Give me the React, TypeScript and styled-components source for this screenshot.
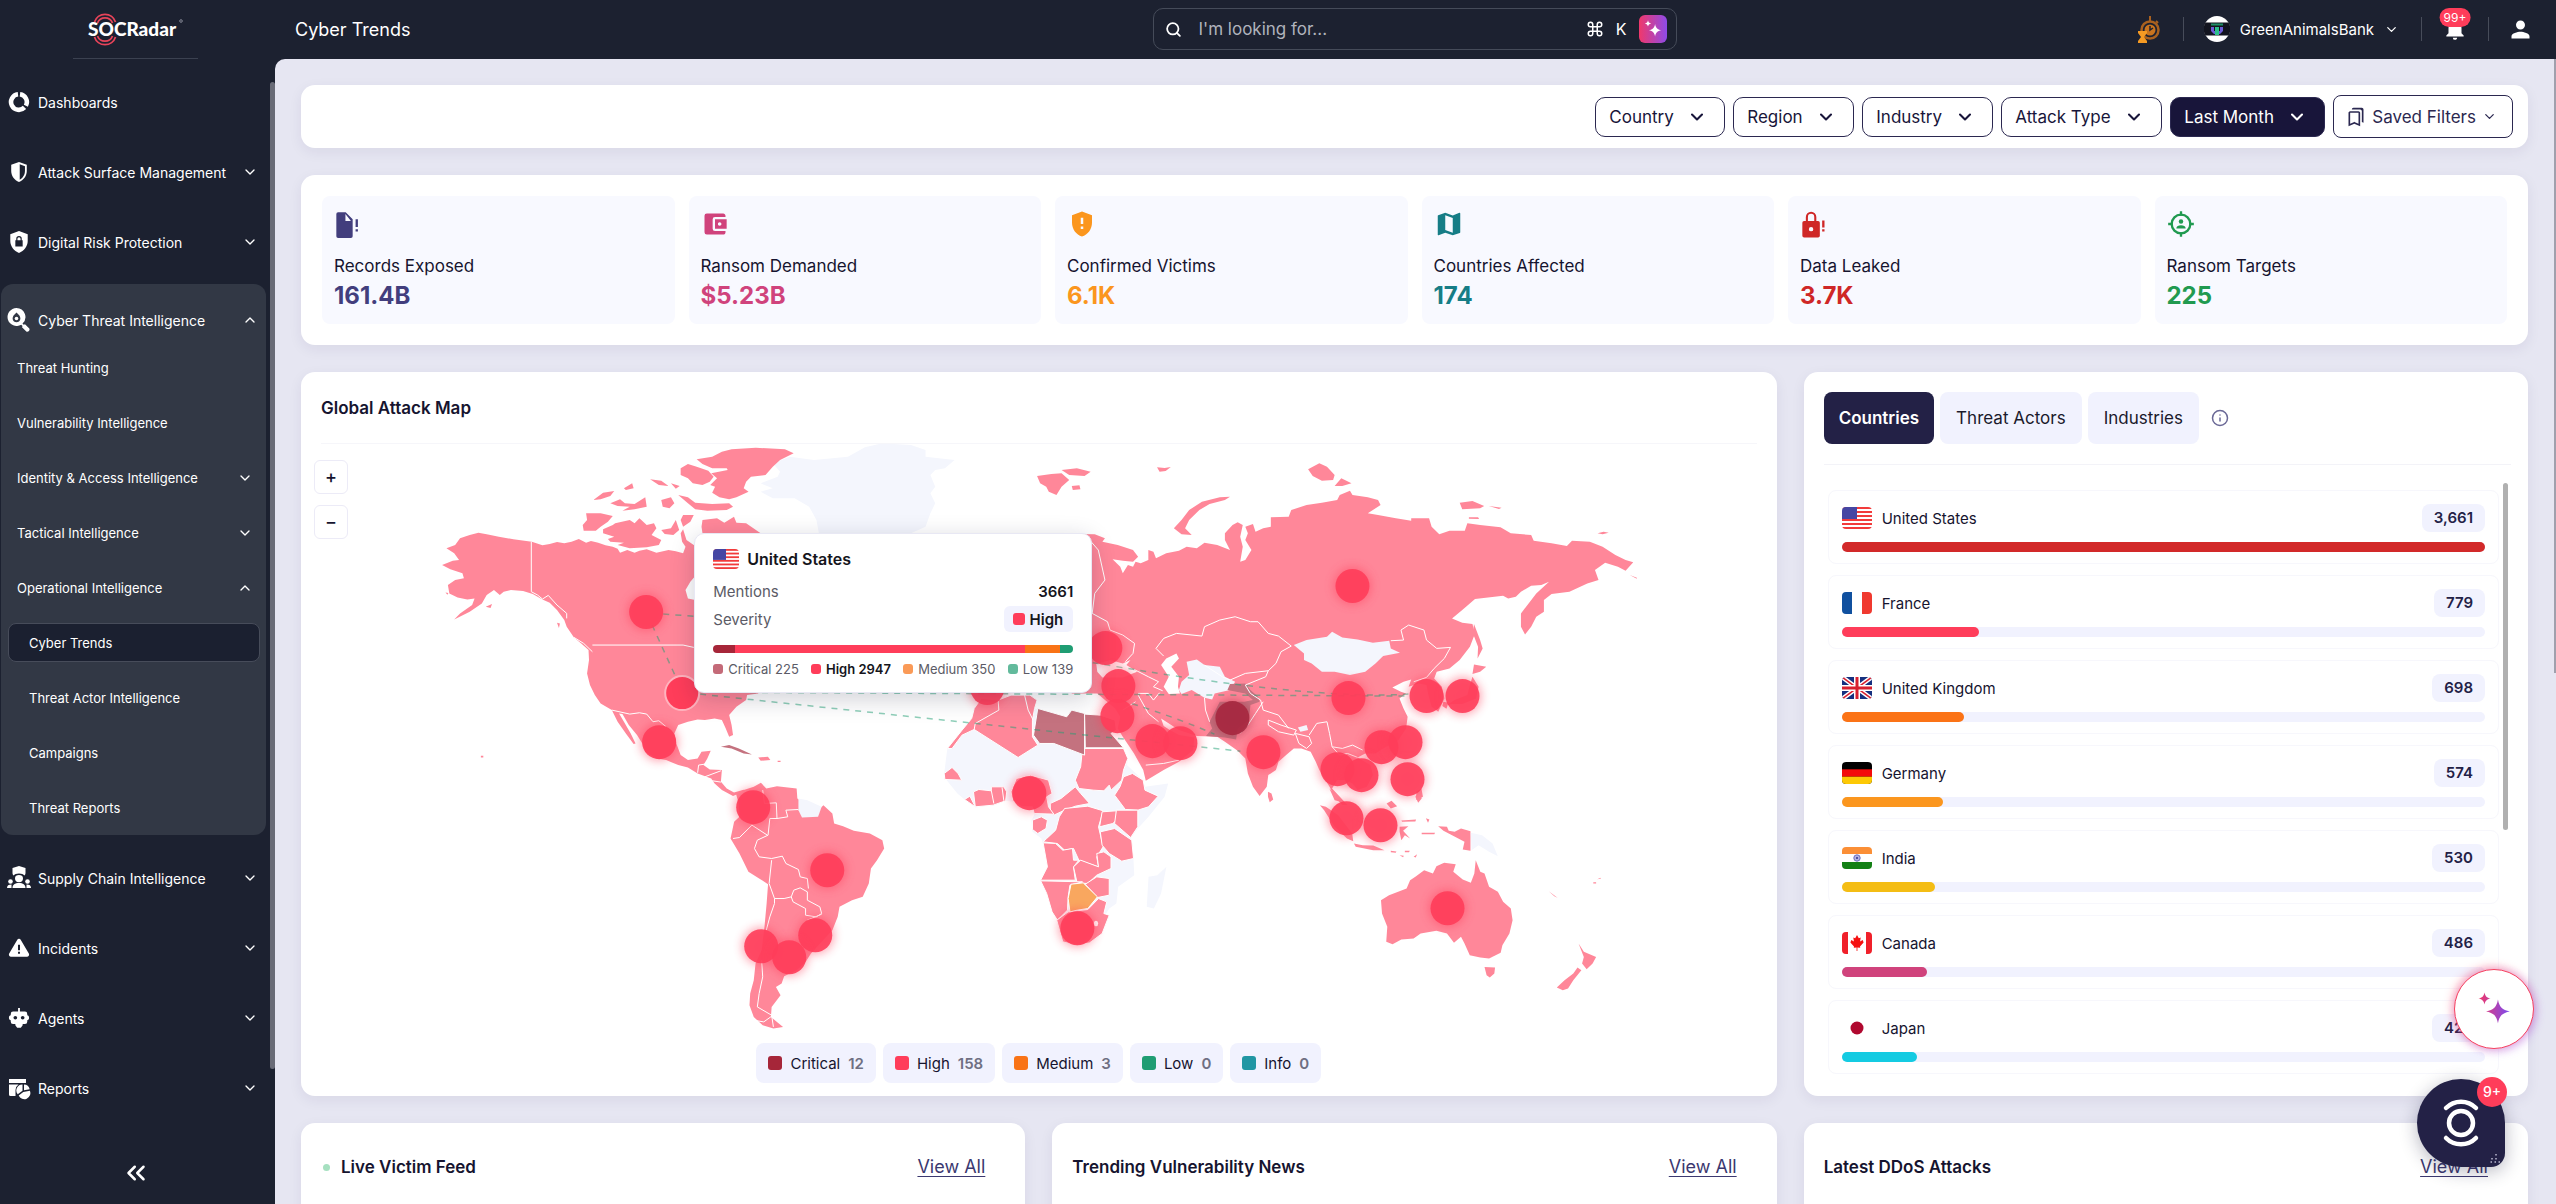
import React from "react";
import styled, { createGlobalStyle } from "styled-components";
import { ChevronDown, ChevronUp, ChevronsLeft, Command, Info, Search } from "lucide-react";
import {
  MdAccountBalanceWallet,
  MdGppMaybe,
  MdMap,
  MdNotifications,
  MdOutlineBookmarks,
  MdPerson,
} from "react-icons/md";

const GlobalStyle = createGlobalStyle`
  *, *::before, *::after { box-sizing: border-box; }
  html, body { margin: 0; padding: 0; }
  body {
    font-family: Inter, "Liberation Sans", sans-serif;
    background: #1c2130;
    color: #16142f;
    overflow: hidden;
  }
  button, input, select { font: inherit; color: inherit; margin: 0; }
  button { cursor: pointer; }
  h1, h2, p, ul { margin: 0; padding: 0; }
  ul { list-style: none; }
`;

/* ---------- Shell ---------- */

const Shell = styled.div`
  display: grid;
  grid-template-columns: 275px minmax(0, 1fr);
  height: 100vh;
  background: #1c2130;
`;

const Sidebar = styled.aside`
  position: relative;
  display: flex;
  flex-direction: column;
  min-height: 0;
  color: #fff;
`;

const Brand = styled.div`
  display: flex;
  justify-content: center;
  align-items: center;
  height: 59px;
  margin: 0 77px 8px 73px;
  border-bottom: 1px solid #3b4150;
  flex: none;
`;

const Nav = styled.nav`
  flex: 1;
  min-height: 0;
  overflow: hidden;
`;

const NavButton = styled.button<{ $compact?: boolean }>`
  display: flex;
  align-items: center;
  gap: 8px;
  width: ${(p) => (p.$compact ? 266 : 267)}px;
  height: ${(p) => (p.$compact ? 56 : 70)}px;
  padding: ${(p) => (p.$compact ? "16px 9px 0 7px" : "0 9px 0 8px")};
  border: 0;
  background: none;
  font-size: 14px;
  text-align: left;
  white-space: nowrap;
  svg { flex: none; }
  span { flex: 1; }
`;

const NavSlot = styled.i`
  display: flex;
  justify-content: center;
  width: 22px;
  flex: none;
`;

const NavGroup = styled.div`
  margin: 7px 0 8px 1px;
  width: 265px;
  background: #323845;
  border-radius: 12px;
  overflow: hidden;
`;

const SubButton = styled.button<{ $deep?: boolean }>`
  display: flex;
  align-items: center;
  justify-content: space-between;
  width: 100%;
  height: 55px;
  padding: 0 13px 0 ${(p) => (p.$deep ? 28 : 16)}px;
  border: 0;
  background: none;
  font-size: 13px;
  text-align: left;
  white-space: nowrap;
`;

const ActiveLink = styled.a`
  display: flex;
  align-items: center;
  height: 39px;
  margin: 8px 6px 8px 7px;
  padding: 0 20px;
  border: 1px solid #474c5a;
  border-radius: 8px;
  background: #1b2030;
  color: #fff;
  font-size: 13px;
  text-decoration: none;
`;

const SideScroll = styled.div`
  position: absolute;
  top: 82px;
  right: 0;
  bottom: 135px;
  width: 5px;
  border-radius: 3px;
  background: #696b77;
`;

const Collapse = styled.button`
  display: flex;
  align-items: center;
  justify-content: center;
  height: 62px;
  margin-right: 4px;
  border: 0;
  background: none;
  flex: none;
`;

const Page = styled.div`
  display: flex;
  flex-direction: column;
  min-width: 0;
  min-height: 0;
`;

/* ---------- Top bar ---------- */

const TopBar = styled.header`
  display: grid;
  grid-template-columns: 1fr 524px 1fr;
  align-items: center;
  height: 59px;
  flex: none;
  padding: 0 22px 1px 20px;
  color: #fff;
  h1 { font-size: 18px; font-weight: 400; }
`;

const SearchBox = styled.label`
  display: flex;
  align-items: center;
  height: 42px;
  padding: 0 9px 0 11px;
  border: 1px solid #454b59;
  border-radius: 10px;
  font-size: 17px;
  input {
    flex: 1;
    min-width: 0;
    margin-left: 15px;
    border: 0;
    outline: 0;
    background: none;
    &::placeholder { color: #b0b3bc; opacity: 1; }
  }
  kbd {
    display: flex;
    align-items: center;
    gap: 12px;
    font: inherit;
    font-size: 16px;
  }
`;

const SparkButton = styled.button`
  display: flex;
  align-items: center;
  justify-content: center;
  width: 28px;
  height: 28px;
  margin-left: 12px;
  padding: 0;
  border: 0;
  border-radius: 6px;
  background: linear-gradient(90deg, #f0386b, #8e4be8);
`;

const TopActions = styled.div`
  display: flex;
  align-items: center;
  justify-content: flex-end;
`;

const Divider = styled.span`
  width: 1px;
  height: 24px;
  background: #474c5a;
`;

const Account = styled.button`
  display: flex;
  align-items: center;
  gap: 10px;
  margin: 0 22px 0 20px;
  padding: 0;
  border: 0;
  background: none;
  font-size: 15px;
`;

const IconButton = styled.button<{ $left: number; $right: number }>`
  position: relative;
  display: flex;
  margin: 0 ${(p) => p.$right}px 0 ${(p) => p.$left}px;
  padding: 0;
  border: 0;
  background: none;
`;

const AlertCount = styled.span`
  position: absolute;
  left: 50%;
  bottom: 15px;
  transform: translateX(-50%);
  padding: 0 4px;
  border-radius: 10px;
  background: #ff3d5a;
  font-size: 12px;
  line-height: 19px;
`;

/* ---------- Content ---------- */

const Main = styled.main`
  position: relative;
  flex: 1;
  min-height: 0;
  overflow: hidden;
  padding: 26px 28px 0 26px;
  border-top-left-radius: 10px;
  background: #e6e6f2;
`;

const PageScroll = styled.div`
  position: absolute;
  top: 0;
  right: 0;
  width: 2px;
  height: 614px;
  background: #a0a0ad;
`;

const Stack = styled.div`
  display: flex;
  flex-direction: column;
  gap: 27px;
`;

const Card = styled.section`
  background: #fff;
  border-radius: 14px;
  box-shadow: 0 4px 14px rgba(40, 35, 90, 0.07);
`;

const FilterCard = styled(Card)`
  display: flex;
  align-items: center;
  justify-content: flex-end;
  gap: 8px;
  height: 63px;
  padding: 0 15px;
`;

const SelectBox = styled.label<{ $dark?: boolean }>`
  position: relative;
  display: flex;
  align-items: center;
  height: 40px;
  border: 1px solid #2b2850;
  border-radius: 10px;
  background: ${(p) => (p.$dark ? "#18153a" : "#fff")};
  color: ${(p) => (p.$dark ? "#fff" : "#18153a")};
  font-size: 17px;
  select {
    appearance: none;
    height: 100%;
    padding: 0 50px 0 13px;
    border: 0;
    outline: 0;
    background: none;
  }
  svg {
    position: absolute;
    right: 17px;
    pointer-events: none;
  }
`;

const SavedButton = styled.button`
  display: flex;
  align-items: center;
  gap: 6px;
  height: 43px;
  padding: 0 15px 0 12px;
  border: 1px solid #2b2850;
  border-radius: 8px;
  background: #fff;
  color: #2b2850;
  font-size: 17px;
`;

const StatCard = styled(Card)`
  display: grid;
  grid-template-columns: repeat(6, minmax(0, 1fr));
  gap: 14px;
  padding: 21px;
`;

const Stat = styled.div<{ $color: string }>`
  height: 128px;
  padding: 14px 12px;
  border-radius: 8px;
  background: #f8f9ff;
  svg { display: block; color: ${(p) => p.$color}; }
  p { margin-top: 17px; font-size: 17px; line-height: 22px; }
  strong {
    display: block;
    margin-top: 4px;
    color: ${(p) => p.$color};
    font-size: 24px;
    font-weight: 700;
    line-height: 30px;
  }
`;

const Columns = styled.div`
  display: grid;
  grid-template-columns: repeat(3, minmax(0, 1fr));
  gap: 27px;
`;

const MapCard = styled(Card)`
  grid-column: span 2;
  padding: 0 20px 13px;
`;

const CardTitle = styled.h2`
  font-size: 17px;
  font-weight: 600;
  line-height: 24px;
`;

const MapHead = styled.div`
  display: flex;
  align-items: center;
  height: 72px;
  border-bottom: 1px solid #f6f6fa;
`;

const MapArea = styled.div`
  position: relative;
  > svg { display: block; width: 100%; height: auto; }
`;

const ZoomControls = styled.div`
  position: absolute;
  top: 16px;
  left: -7px;
  display: flex;
  flex-direction: column;
  gap: 11px;
  button {
    width: 34px;
    height: 34px;
    padding: 0;
    border: 1px solid #ecebf7;
    border-radius: 6px;
    background: #fff;
    font-size: 18px;
    font-weight: 500;
    line-height: 30px;
  }
`;

const Tooltip = styled.div`
  position: absolute;
  top: 15%;
  left: 26%;
  width: 398px;
  height: 160px;
  padding: 13px 18px;
  border: 1px solid #e8e8f4;
  border-radius: 10px;
  background: #fff;
  box-shadow: 0 6px 24px rgba(20, 20, 50, 0.2);
  color: #15151c;
  font-size: 15px;
`;

const TipTitle = styled.div`
  display: flex;
  align-items: center;
  gap: 8px;
  height: 24px;
  margin-bottom: 6px;
  font-size: 16px;
  font-weight: 600;
`;

const TipRow = styled.div`
  display: flex;
  align-items: center;
  justify-content: space-between;
  height: 28px;
  color: #5b5b66;
  b { color: #15151c; font-weight: 600; }
`;

const SeverityTag = styled.b`
  display: flex;
  align-items: center;
  gap: 5px;
  height: 26px;
  padding: 0 10px 0 9px;
  border-radius: 6px;
  background: #f1f2fe;
`;

const Swatch = styled.i<{ $color: string; $size: number }>`
  width: ${(p) => p.$size}px;
  height: ${(p) => p.$size}px;
  border-radius: 3px;
  background: ${(p) => p.$color};
`;

const SplitBar = styled.div`
  display: flex;
  height: 8px;
  margin: 12px 0 7px;
  border-radius: 4px;
  overflow: hidden;
  i { height: 100%; }
`;

const TipLegend = styled.div`
  display: flex;
  align-items: center;
  justify-content: space-between;
  color: #5b5b66;
  font-size: 13px;
  line-height: 18px;
  white-space: nowrap;
  span { display: flex; align-items: center; gap: 5px; }
  b { color: #15151c; font-weight: 600; }
`;

const Legend = styled.div`
  display: flex;
  justify-content: center;
  gap: 7px;
  margin-top: 3px;
`;

const LegendChip = styled.button`
  display: flex;
  align-items: center;
  gap: 8px;
  height: 40px;
  padding: 0 12px;
  border: 0;
  border-radius: 8px;
  background: #f1f2fe;
  font-size: 15px;
  b { color: #6f6f82; font-weight: 600; }
`;

const RankCard = styled(Card)`
  padding: 20px 17px 21px 20px;
`;

const TabRow = styled.div`
  display: flex;
  align-items: center;
  gap: 6px;
  height: 73px;
  padding-bottom: 21px;
  border-bottom: 1px solid #f3f3f8;
  > svg { margin-left: 6px; color: #6a6896; }
`;

const Tab = styled.button<{ $active?: boolean }>`
  height: 52px;
  padding: 0 ${(p) => (p.$active ? 15 : 16)}px;
  border: 0;
  border-radius: 8px;
  background: ${(p) => (p.$active ? "#232146" : "#f1f2fe")};
  color: ${(p) => (p.$active ? "#fff" : "#1b1a2c")};
  font-size: 17px;
  font-weight: ${(p) => (p.$active ? 600 : 400)};
`;

const RankScroll = styled.div`
  position: relative;
  padding: 25px 12px 0 4px;
  &::after {
    content: "";
    position: absolute;
    top: 18px;
    right: 3px;
    width: 5px;
    height: 347px;
    border-radius: 3px;
    background: #b0b0b0;
  }
`;

const RankList = styled.ul`
  display: flex;
  flex-direction: column;
  gap: 11px;
`;

const RankItem = styled.li`
  height: 74px;
  padding: 13px;
  border: 1px solid #f7f7fc;
  border-radius: 8px;
`;

const RankHead = styled.div`
  display: flex;
  align-items: center;
  gap: 10px;
  height: 28px;
  font-size: 15px;
  span { flex: 1; }
  b {
    padding: 0 12px;
    border-radius: 8px;
    background: #f1f2fe;
    color: #232146;
    font-weight: 600;
    line-height: 28px;
  }
`;

const Track = styled.div`
  height: 10px;
  margin-top: 10px;
  border-radius: 5px;
  background: #f1f2fe;
`;

const Fill = styled.div`
  height: 100%;
  border-radius: 5px;
`;

const FeedCard = styled(Card)`
  height: 320px;
  padding: 32px 40px 0 20px;
`;

const FeedHead = styled.div`
  display: flex;
  align-items: center;
  gap: 10px;
  height: 24px;
  h2 { flex: 1; }
  a { color: #3b3870; font-size: 18px; line-height: 24px; text-underline-offset: 3px; }
`;

const LiveDot = styled.i`
  width: 7px;
  height: 7px;
  border-radius: 50%;
  margin: 0 1px 0 2px;
  background: #a6e0c0;
`;

/* ---------- Floating buttons ---------- */

const AssistantButton = styled.button`
  position: fixed;
  right: 22px;
  bottom: 155px;
  display: flex;
  align-items: center;
  justify-content: center;
  width: 80px;
  height: 80px;
  padding: 0;
  border: 1px solid #f5405f;
  border-radius: 50%;
  background: #fff;
  box-shadow: -2px -2px 10px rgba(255, 61, 92, 0.4), 2px 2px 10px rgba(150, 70, 230, 0.4);
`;

const HelpButton = styled.button`
  position: fixed;
  right: 51px;
  bottom: 37px;
  width: 88px;
  height: 88px;
  padding: 0;
  border: 0;
  border-radius: 44px 44px 14px 44px;
  background: #232146;
  box-shadow: 0 4px 18px rgba(20, 20, 50, 0.3);
  svg { display: block; }
`;

const HelpCount = styled.span`
  position: absolute;
  top: -2px;
  right: -2px;
  width: 30px;
  height: 30px;
  border-radius: 50%;
  background: #ff3d5a;
  color: #fff;
  font-size: 14px;
  font-weight: 500;
  line-height: 30px;
  text-align: center;
`;

/* ---------- Icons ---------- */

const Glyph = ({ size = 24, children }: { size?: number; children: React.ReactNode }) => (
  <svg width={size} height={size} viewBox="0 0 24 24" fill="currentColor" aria-hidden="true">
    {children}
  </svg>
);

const DonutIcon = () => (
  <svg width="22" height="22" viewBox="0 0 24 24" fill="none" stroke="currentColor" strokeWidth="5" aria-hidden="true">
    <path d="M13.1 3.600A8.500 8.500 0 0 1 19.500 16.100M18 17.900A8.500 8.500 0 1 1 10.900 3.600" />
  </svg>
);

const HalfShield = () => (
  <Glyph size={22}>
    <path fillRule="evenodd" d="M12 1 3.5 4.2V11c0 5.3 3.6 10.2 8.5 12 4.9-1.8 8.5-6.700 8.5-12V4.2zM12.8 3.5l5.7 2.2V11c0 4-2.4 7.7-5.7 9.5z" />
  </Glyph>
);

const LockShield = () => (
  <Glyph size={22}>
    <path fillRule="evenodd" d="M12 0 2.500 3.500V11c0 5.800 4 11 9.500 13 5.500-2 9.500-7.200 9.500-13V3.500zM8 10h1V8.500a3 3 0 0 1 6 0V10h1v7H8zm2.300 0h3.400V8.500a1.700 1.700 0 0 0-3.400 0z" />
  </Glyph>
);

const ThreatSearch = () => (
  <Glyph size={24}>
    <path fillRule="evenodd" d="M9.500 0a9 9 0 1 0 4.700 16.700l1.300 1.300-.5 1.300 4.300 4.300c1.900 1 4-1.100 3-3l-4.300-4.300-1.300.5-1.200-1.200A9 9 0 0 0 9.500 0zm0 4.500c3 2.700 4.200 4.400 3.800 6.800a3.900 3.900 0 0 1-7.600 0C5.300 8.900 6.500 7.200 9.500 4.500z" />
    <circle cx="9.500" cy="10.500" r="1.800" />
  </Glyph>
);

const SupplyChain = () => (
  <Glyph size={24}>
    <path d="M12 0 5.500 2v5c0 1 .5 2 1 2.600 1-1.200 3-2.100 5.500-2.100s4.500.9 5.500 2.100c.5-.6 1-1.600 1-2.600V2z" />
    <path d="M12 9c-2.300 0-4 1-4 3.300a4 4 0 0 0 8 0C16 10 14.300 9 12 9zM5.500 22c0-3.500 2.500-5 6.500-5s6.500 1.500 6.500 5z" />
    <circle cx="3.500" cy="15.500" r="2.300" />
    <circle cx="20.500" cy="15.500" r="2.300" />
    <path d="M0 22c0-2.500 1.500-3.500 4.500-3.500V22zM24 22c0-2.500-1.500-3.500-4.500-3.500V22z" />
  </Glyph>
);

const AlertTriangle = () => (
  <Glyph size={22}>
    <path fillRule="evenodd" d="M10 3.200a2.300 2.300 0 0 1 4 0l8.700 14.900a2.300 2.300 0 0 1-2 3.400H3.300a2.300 2.300 0 0 1-2-3.400zM10.900 8.500h2.200v6h-2.200zm0 7.500h2.200v2.200h-2.200z" />
  </Glyph>
);

const BotIcon = () => (
  <Glyph size={22}>
    <path fillRule="evenodd" d="M11 1h2v4h5.500a2.500 2.500 0 0 1 2.500 2.500V9c1.200.2 2 1.300 2 2.800s-.8 2.500-2 2.700v1.500a2.500 2.500 0 0 1-2.500 2.500H16V20l-2 2.500h-4L8 20v-1.500H5.500A2.500 2.500 0 0 1 3 16v-1.500c-1.200-.2-2-1.200-2-2.700S1.800 9.200 3 9V7.500A2.500 2.500 0 0 1 5.500 5H11zM8 9.700a2 2 0 1 0 0 4 2 2 0 0 0 0-4zm8 0a2 2 0 1 0 0 4 2 2 0 0 0 0-4z" />
  </Glyph>
);

const ReportIcon = () => (
  <Glyph size={24}>
    <path d="M2 3h17v4H2zM2 8.500h9.500A7 7 0 0 0 8.500 14v6H3.500A1.500 1.500 0 0 1 2 18.500z" />
    <path d="M15.500 8.500v6.200l-4.800 3.600A6 6 0 0 1 15.500 8.500zM17 8.500a6 6 0 0 1 5.700 4.700L17 14.300zM11.700 19.500l4.600-3.500 6.600-1.300a6 6 0 0 1-11.200 4.800z" />
  </Glyph>
);

const FileAlert = () => (
  <Glyph size={28}>
    <path fillRule="evenodd" d="M3.500 2A1.500 1.500 0 0 0 2 3.500v19A1.500 1.500 0 0 0 3.500 24h11a1.500 1.500 0 0 0 1.500-1.500V8l-6-6zM9.800 3.500 14.500 9.500H9.800zM18.500 8h2v6.500h-2zm0 8.500h2v2h-2z" />
  </Glyph>
);

const LockAlert = () => (
  <Glyph size={28}>
    <path fillRule="evenodd" d="M3.500 9.500H5V6a4.500 4.500 0 0 1 9 0v3.500h1.500A1.500 1.500 0 0 1 17 11v11a1.500 1.500 0 0 1-1.500 1.500h-12A1.500 1.500 0 0 1 2 22V11a1.500 1.500 0 0 1 1.500-1.500zm3.300 0h5.400V6a2.700 2.700 0 0 0-5.400 0zm2.700 5a1.900 1.900 0 1 0 0 3.800 1.900 1.900 0 0 0 0-3.800zM19 9h2v6h-2zm0 7.500h2v2h-2z" />
  </Glyph>
);

const TargetPerson = () => (
  <svg width="28" height="28" viewBox="0 0 24 24" fill="none" stroke="currentColor" strokeWidth="2" aria-hidden="true">
    <circle cx="12" cy="12" r="8" />
    <path d="M12 1v4M12 19v4M1 12h4M19 12h4" />
    <circle cx="12" cy="9.800" r="1.900" fill="currentColor" stroke="none" />
    <path d="M8 15.800c0-2 1.800-2.800 4-2.800s4 .8 4 2.800z" fill="currentColor" stroke="none" />
  </svg>
);

const Sparkles = ({ size, gradient }: { size: number; gradient?: boolean }) => (
  <svg width={size} height={size} viewBox="0 0 24 24" aria-hidden="true">
    <defs>
      <linearGradient id="sparkle" x1="0" x2="1">
        <stop offset="0" stopColor="#f0386b" />
        <stop offset="1" stopColor="#7a4bf0" />
      </linearGradient>
    </defs>
    <path
      fill={gradient ? "url(#sparkle)" : "#fff"}
      d="M14.500 6c.9 4.800 2.700 6.600 7.500 7.500-4.800.9-6.600 2.700-7.500 7.500-.9-4.800-2.700-6.600-7.500-7.500 4.800-.9 6.600-2.700 7.500-7.500zM6 1.500c.5 2.400 1.400 3.300 3.800 3.800C7.400 5.800 6.500 6.700 6 9.100 5.500 6.700 4.600 5.800 2.200 5.300 4.600 4.800 5.500 3.900 6 1.500z"
    />
  </svg>
);

const TimerIcon = () => (
  <svg width="24" height="28" viewBox="0 0 24 28" aria-hidden="true">
    <circle cx="14" cy="15" r="8.500" fill="none" stroke="#a9611f" strokeWidth="2.500" />
    <circle cx="14" cy="15" r="5.500" fill="#c9741f" />
    <path d="M14 1v5M20 6l2 2" stroke="#a9611f" strokeWidth="2" />
    <path d="M14 11v4l3-2" stroke="#1c2130" strokeWidth="1.500" fill="none" />
    <path d="M2 16h9v2l-3 4 3 4v2H2v-2l3-4-3-4z" fill="#f59a23" />
  </svg>
);

const Avatar = () => (
  <svg width="26" height="26" viewBox="0 0 26 26" aria-hidden="true">
    <circle cx="13" cy="13" r="13" fill="#fff" />
    <path d="M1.500 6.500h23a13 13 0 0 1 0 13h-23a13 13 0 0 1 0-13z" fill="#12141f" />
    <path d="M7 7.500h12v2H7z" fill="#1f8f66" />
    <path d="M7 11h3v4h6v-4h3v4l-3 3h-6l-3-3z" fill="#6b5bd6" />
    <path d="M11 11h4v8h-4z" fill="#2bbf8a" />
  </svg>
);

const Logo = () => (
  <svg width="98" height="34" viewBox="0 0 98 34" role="img" aria-label="SOCRadar">
    <g fill="none" stroke="#e8445a" strokeWidth="1.800">
      <path d="M7.500 10a11 11 0 0 1 21 0M10.500 11a8 8 0 0 1 15 0M7.500 25a11 11 0 0 0 21 0M10.500 24a8 8 0 0 0 15 0" />
    </g>
    <text x="1" y="24" fill="#fff" fontFamily="Lato, sans-serif" fontWeight="900" fontSize="19">
      SOCRadar
    </text>
    <circle cx="94" cy="9" r="1.300" fill="none" stroke="#9a9dab" strokeWidth="0.800" />
  </svg>
);

/* ---------- Flags ---------- */

const flagArt: Record<string, React.ReactNode> = {
  us: (
    <>
      <rect width="30" height="22" fill="#fff" />
      {[0, 1, 2, 3, 4, 5].map((i) => (
        <rect key={i} y={i * 4} width="30" height="2" fill="#f23b3b" />
      ))}
      <rect width="15" height="12" fill="#4546a3" />
    </>
  ),
  fr: (
    <>
      <rect width="30" height="22" fill="#fff" />
      <rect width="10" height="22" fill="#10509f" />
      <rect x="20" width="10" height="22" fill="#f0392f" />
    </>
  ),
  gb: (
    <>
      <rect width="30" height="22" fill="#16307f" />
      <path d="M0 0 30 22M30 0 0 22" stroke="#fff" strokeWidth="4.500" />
      <path d="M0 0 30 22M30 0 0 22" stroke="#d8202f" strokeWidth="1.500" />
      <path d="M15 0v22M0 11h30" stroke="#fff" strokeWidth="6" />
      <path d="M15 0v22M0 11h30" stroke="#d8202f" strokeWidth="3" />
    </>
  ),
  de: (
    <>
      <rect width="30" height="22" fill="#000" />
      <rect y="7.300" width="30" height="7.400" fill="#f40b0b" />
      <rect y="14.700" width="30" height="7.300" fill="#fdc905" />
    </>
  ),
  in: (
    <>
      <rect width="30" height="22" fill="#fff" />
      <rect width="30" height="7" fill="#fb8f36" />
      <rect y="15" width="30" height="7" fill="#138015" />
      <circle cx="15" cy="11" r="3.200" fill="#b3b3e0" stroke="#6f6fc0" />
      <circle cx="15" cy="11" r="1" fill="#303090" />
    </>
  ),
  ca: (
    <>
      <rect width="30" height="22" fill="#fff" />
      <rect width="6" height="22" fill="#f0202a" />
      <rect x="24" width="6" height="22" fill="#f0202a" />
      <path d="m15 3 1.800 3.200 1.900-.7-.6 4 2.600-1.500.9 2.600-3.600 4 .2 1.200-2.800-.4v3.600h-.8v-3.600l-2.800.4.200-1.200-3.600-4 .9-2.600 2.600 1.500-.6-4 1.900.7z" fill="#f51010" />
    </>
  ),
  jp: (
    <>
      <rect width="30" height="22" fill="#fff" />
      <circle cx="15" cy="11" r="6.500" fill="#b0082f" />
    </>
  ),
};

const FlagSvg = styled.svg`
  display: block;
  flex: none;
  border-radius: 4px;
`;

const Flag = ({ code, width = 30 }: { code: string; width?: number }) => (
  <FlagSvg width={width} height={width === 30 ? 22 : 20} viewBox="0 0 30 22" preserveAspectRatio="none" aria-hidden="true">
    {flagArt[code]}
  </FlagSvg>
);

/* ---------- World map ---------- */

const HIGH = "#ff8799";
const NONE = "#f4f6fd";
const CRIT = "#c4727f";

const northAmerica =
  "M368 518 385 523 410 530 440 538 478 545 500 556 515 552 530 546 545 550 560 545 575 537 590 548 600 543 615 548 630 556 645 560 655 566 660 578 675 570 690 578 700 572 715 568 735 578 760 570 775 574 790 580 795 560 788 545 785 520 790 508 797 540 812 555 830 560 820 640 805 665 795 690 800 715 815 720 830 740 940 900 945 1000 922 1005 920 1020 900 1040 885 1065 890 1095 893 1125 885 1130 878 1105 870 1080 855 1075 835 1080 820 1078 800 1085 780 1095 772 1120 776 1150 785 1185 800 1200 820 1195 828 1175 847 1172 840 1195 832 1215 845 1228 870 1230 868 1265 880 1285 895 1297 915 1289 932 1295 925 1303 905 1300 893 1308 870 1290 855 1270 848 1255 820 1240 800 1222 780 1215 755 1200 735 1195 712 1175 706 1150 695 1125 678 1095 665 1062 658 1060 668 1085 682 1120 692 1150 688 1152 672 1120 655 1085 643 1050 620 1030 608 1005 598 975 592 940 596 900 595 870 580 850 565 832 550 800 545 780 530 750 515 728 500 718 480 702 460 693 435 690 420 695 412 705 400 690 385 705 375 730 350 755 318 778 330 760 355 735 360 715 345 718 325 712 308 700 305 675 320 660 338 655 335 640 310 628 293 615 315 602 328 600 318 580 302 565 320 555 330 535 350 525Z";

const arctic =
  "M818 298 850 290 870 275 890 268 940 263 1000 268 1018 280 990 300 975 320 960 345 930 350 920 365 915 385 925 395 900 412 885 418 865 412 850 398 856 380 846 375 860 355 848 340 882 330 880 325 850 325 830 312ZM785 325 800 312 818 320 842 332 853 350 845 365 830 375 810 370 800 355 785 345ZM590 460 620 460 645 468 635 485 620 500 610 512 585 512 583 495 592 480ZM650 490 680 480 690 490 700 475 715 495 730 490 735 505 725 525 745 540 740 555 715 562 680 565 655 555 668 548 640 545 635 537 648 530 625 520 625 508 645 495ZM605 420 625 398 648 393 640 408 620 418ZM640 430 660 418 670 430 690 432 712 412 715 440 690 448 665 452 680 440 655 438ZM668 385 685 370 688 385 672 390ZM722 358 745 362 760 378 740 375ZM745 420 765 412 772 430 762 445 748 440ZM780 405 800 412 815 428 850 432 885 430 893 440 880 450 840 452 815 448 800 430ZM765 370 783 378 775 386ZM830 480 860 475 875 488 895 470 900 488 920 490 935 505 950 520 830 520 828 500ZM745 510 765 505 775 480 782 510 770 525 752 522ZM790 465 812 465 805 485 790 500 785 480ZM383 740 396 732 393 744ZM530 788 536 790 534 804ZM373 1187h5v5h-5ZM945 1192 965 1190 970 1200 950 1202ZM985 1202h6v4h-6ZM300 697l6 2-2 5Z";

const greenland =
  "M950 370 985 350 990 335 975 310 1010 290 1060 300 1130 290 1165 262 1200 250 1260 255 1290 270 1290 290 1350 300 1330 325 1310 330 1300 345 1310 380 1300 400 1310 430 1300 460 1290 500 1260 520 1150 560 1100 560 1070 520 1065 480 1050 440 1020 415 975 415 950 395 975 385Z";

const americaBorders =
  "M477 545V695L490 705 500 717 512 706 530 735 550 760 550 775M603 855H790L812 862M643 1050 680 1062 700 1058 715 1062 728 1085 740 1082 755 1100M820 1238 822 1215 835 1212M835 1250 868 1232M850 1262 868 1266M565 832 585 850 603 875";

const eurasia =
  "M150 402 185 403 205 415 200 425 230 435 260 450 270 470 260 485 240 482 220 478 235 500 240 520 250 495 260 500 265 485 275 490 290 480 290 450 300 455 305 475 325 460 350 452 365 440 385 445 400 428 425 435 450 450 440 420 440 400 455 375 465 367 475 375 470 410 475 440 470 485 480 480 492 450 480 420 485 400 480 380 495 372 500 395 515 385 530 380 530 352 565 350 570 330 600 315 630 308 660 300 665 285 685 272 690 285 720 292 740 300 745 315 720 340 740 345 775 355 805 362 805 355 840 355 845 380 860 403 880 392 910 392 915 370 940 375 980 382 1000 400 1040 405 1045 422 1080 430 1110 438 1120 422 1155 425 1180 440 1205 465 1225 480 1240 487 1225 512 1210 500 1185 488 1165 510 1172 540 1150 550 1115 575 1080 582 1065 600 1065 635 1050 650 1040 680 1028 703 1020 680 1020 640 1035 610 1050 580 1075 545 1060 555 1040 557 1020 575 1010 590 995 595 985 587 930 597 905 630 885 655 905 668 925 672 930 700 920 740 900 780 880 805 855 815 850 835 865 860 870 895 858 935 845 920 838 880 835 855 820 850 800 860 805 838 790 845 768 862 785 875 795 880 782 895 790 925 798 950 795 985 780 1020 750 1045 735 1060 715 1060 700 1072 725 1095 730 1125 718 1160 700 1170 690 1150 675 1140 660 1140 650 1165 662 1185 680 1215 670 1215 655 1190 645 1160 635 1135 625 1110 618 1085 608 1055 590 1045 575 1045 560 1065 545 1085 540 1110 525 1125 522 1160 508 1188 495 1160 485 1120 480 1075 465 1052 440 1025 425 1010 385 1008 350 990 325 965 315 955 320 978 332 990 350 1005 380 1012 378 1050 350 1085 320 1110 285 1142 280 1110 262 1060 240 1010 230 985 235 950 225 925 190 880 140 880 120 600Z";

const eurasiaIslands =
  "M340 385 355 360 370 330 395 305 430 292 450 290 440 300 410 312 390 330 370 360 362 385 375 405 355 403ZM72 228 100 222 120 220 135 240 120 260 110 285 95 275 90 260 78 250ZM120 210 150 205 177 215 165 228 135 225ZM140 258l15-2 2 12-15 2ZM307 202l15 2 12-3-10 12-12 2ZM603 208 625 190 640 200 655 225 652 240 630 242 612 228ZM655 258 668 235 688 250 670 258ZM900 308 925 303 948 318 940 325 905 328ZM957 318l25 5-5 4ZM918 352l18 0 2 5-20-1ZM1170 400 1182 395 1192 398 1180 403ZM1233 525l14 8v3ZM928 672 940 720 945 745 935 775 936 740 926 700ZM928 793 952 800 940 815 925 822ZM925 830 937 860 932 895 905 912 885 912 875 915 890 900 915 885 920 855ZM868 905l10 3-4 18-8-8ZM815 1175 825 1165 828 1190 815 1200Z";

const seas =
  "M188 792 215 780 240 790 255 780 247 795 268 815 240 832 200 832 190 815ZM315 795 325 775 345 760 350 775 335 800 350 830 348 860 352 880 330 882 320 860 330 830Z";

const unlistedAsia =
  "M365 785 385 778 400 795 430 800 440 830 460 845 450 870 420 880 415 898 400 893 375 870 355 882 350 870 355 845 370 825ZM575 735 600 720 640 710 650 695 670 712 700 718 730 728 762 722 765 745 783 758 750 768 735 790 715 815 685 825 655 815 630 815 610 790 595 780 595 760ZM583 982 600 975 603 990 588 995Z";

const criticalAsia = "M403 1008 415 985 410 965 430 905 455 905 478 905 495 900 480 880 445 870 450 852 480 850 490 870 505 890 508 905 490 915 487 960 465 985 462 1018 440 1012Z";

const asiaBorders =
  "M175 420 192 450 205 540 185 580 180 640 210 665 215 690 240 705 263 730 260 760 245 785M320 768 305 745 320 715 345 700 395 708 400 680 430 660 460 650 490 665 505 665 525 700 545 708 570 738 550 755 540 790 525 812 480 820 450 840 435 830 400 795M525 812 520 830 480 855 490 880 510 900 515 930 545 945 565 985M525 960 550 975 580 990 575 1005 545 995 525 975ZM578 1000 605 1010 610 1030 600 1045 585 1030ZM640 965 620 970 605 1005M640 965 645 1000 650 1040 670 1045 690 1035 710 1050M765 722 790 720 785 690 800 675 830 690 835 720 855 745 882 742 870 775 850 805 835 832 810 845M270 885 290 940 310 965M270 880 290 880 300 900 312 878M400 893 402 930 410 965M285 1095 320 1090 350 1080M262 808 290 830 310 845 300 860 318 872M515 905 500 940 485 975 470 1000M265 905 240 930M650 1040 665 1065 680 1060 700 1072";

const africaBase =
  "M767-155 787-185 834-180 870-195 923-195 943-180 936-155 1026-130 1040-150 1076-137 1118-135 1161-120 1165-90 1150-80 1183-35 1197-5 1195 15 1240 60 1245 80 1310 70 1300 110 1255 170 1225 205 1205 235 1213 300 1215 345 1170 380 1165 430 1145 445 1135 462 1145 470 1125 520 1095 545 1055 555 1015 545 1005 490 985 455 970 400 953 360 972 320 965 270 955 235 930 215 927 180 935 165 930 145 900 140 875 125 855 122 825 135 770 142 740 118 720 100 690 60 683 40 690-20 692-35 733-90 760-125Z";

const africaHigh = [
  "M767-155 787-185 834-180 870-195 923-195 943-180 936-155 930-120 930-70 945-45 890-8 767-92 733-75 705-35 692-35 733-90 760-125Z",
  "M1070-35H1185L1197-5 1185 30 1180 60 1150 90 1145 75 1130 92 1100 90 1060 85 1050 60 1065 20Z",
  "M1185 50 1210 40 1240 60 1245 90 1282 108 1255 140 1225 150 1190 148 1160 105 1175 80Z",
  "M980 130 1010 115 1050 80 1065 100 1090 130 1050 138 1020 150 990 165 980 150Z",
  "M870 95 885 55 925 45 975 60 985 100 970 110 975 140 990 162 935 160 930 140 900 140 875 122Z",
  "M765 95 780 88 815 92 815 80 850 80 858 95 855 122 820 135 770 140Z",
  "M740 118 755 108 770 140Z",
  "M683 40 705 22 722 40 732 60 685 58Z",
  "M930 180 955 170 972 180 968 205 945 220 930 208Z",
  "M1005 170 1020 145 1085 138 1128 152 1115 200 1128 260 1110 290 1115 320 1060 300 1045 265 1020 270 1000 250 960 245 970 235 995 210Z",
  "M960 248 995 250 1015 270 1042 265 1045 300 1060 300 1045 320 1050 360 953 360 972 320Z",
  "M1045 320 1065 300 1115 320 1110 280 1130 275 1150 290 1150 325 1110 345 1085 370 1055 368Z",
  "M1125 155 1165 152 1165 180 1155 190 1118 200Z",
  "M1165 150H1225V200L1205 232 1160 190Z",
  "M1120 215 1160 205 1208 240 1213 295 1180 303 1145 280 1125 255Z",
  "M953 362 1070 365 1035 375 1030 410 1028 450 1000 480 985 455 970 400Z",
  "M1078 372 1110 350 1145 355V405L1112 412Z",
  "M998 480 1030 455 1085 448 1115 415 1138 425 1130 460 1145 465 1125 520 1090 548 1055 555 1015 545Z",
];

const africaCritical = [
  "M945-155 1026-130 1040-150 1076-140V-15L990-50 950-50 933-75Z",
  "M1076-138 1120-135 1161-120 1165-90 1150-80 1185-37H1078Z",
];

const southAmerica =
  "M100 100 120 90 150 80 170 68 185 85 215 78 270 85 272 115 285 125 300 165 330 150 345 135 370 160 375 190 400 198 430 212 475 220 510 240 515 265 495 300 478 325 472 370 455 410 425 420 390 440 385 470 370 510 340 545 310 580 295 605 270 630 235 648 228 670 212 680 225 705 200 740 198 770 232 800 205 805 175 795 150 770 138 735 140 700 150 660 155 610 172 570 180 500 186 430 190 372 165 355 135 335 110 280 85 235 90 210 95 185 110 170 108 130Z";

const southBorders =
  "M175 90 180 130 213 128 215 175 195 175 190 225 160 240 152 265 165 290 200 295 230 288 240 310 275 328 280 350 300 355 303 385M200 300 193 370 208 415 235 415 255 410 262 390 280 383 300 395 300 420 335 440 340 460 325 470 295 465 295 445 260 425 255 410M215 175 245 170 240 150 275 148M92 235 110 232 145 195 188 225M208 415 208 430 195 470 185 510M340 462 300 480M172 600 175 650 165 700 160 740 200 765 205 800M150 780 178 785 200 768";

const oceania =
  "M372 420 395 405 445 385 455 360 470 350 495 330 520 340 530 318 552 308 585 312 578 335 605 358 628 368 638 340 642 300 655 335 667 340 680 380 705 395 720 425 742 445 747 480 738 520 718 555 713 578 680 595 655 592 625 585 610 550 600 530 580 548 560 520 530 512 485 520 465 535 430 538 405 552 387 545 390 500 375 460ZM667 620 697 622 695 640 682 652 673 645ZM935 550 950 575 985 590 975 610 958 627 945 610 950 590ZM932 622 943 630 920 660 905 685 890 690 873 682 895 660 920 640ZM850 393 875 413 866 408ZM977 366h8v4h-8ZM988 357l10-4v3ZM582 215 600 205 627 213V272L605 268 610 245 580 228 565 220 550 212 535 198 560 200 565 212ZM198 135 215 140 250 165 290 220 293 243 275 235 240 200 210 150ZM295 250 320 255 350 256 382 270 350 270 300 260ZM425 200 450 198 435 212 455 235 440 225 430 240 425 215ZM388 130 402 122 418 138 400 145ZM225 85 240 100 257 125 240 120ZM430 181 472 178 470 184 432 185ZM500 174 510 178 506 188ZM470 110 482 92 488 115 478 128ZM50 95 60 100 65 118 55 126 50 110ZM400 272l16 2-2 4-14-2ZM425 285l12 2-2 4ZM440 272l14 0-2 4-12 0ZM465 290l10-8-4 10ZM488 218l38 0-2 4-36 0Z";

const papua = "M628 218 660 225 690 250 705 288 680 275 650 255 630 270Z";

const markers: [number, number][] = [
  [646, 612], [659, 742], [987, 688], [1352, 586], [1105, 648], [1118, 686], [1117, 716],
  [1152, 741], [1180, 743], [1263, 752], [1348, 698], [1426, 696], [1462, 696], [1381, 747],
  [1405, 742], [1337, 769], [1361, 775], [1407, 779], [1029, 793], [753, 807], [827, 870],
  [815, 935], [761, 946], [789, 957], [1077, 928], [1346, 818], [1380, 825], [1447, 908],
];

const routes = [
  "M702 692Q1050 694 1408 696",
  "M700 694Q960 722 1240 751",
  "M663 614Q900 630 1107 665T1408 694",
  "M1120 700Q1170 715 1214 734",
  "M652 625 677 680",
];

const WorldMap = () => (
  <svg viewBox="321 444 1435 596" role="img" aria-label="World map of attack severity by country">
    <defs>
      <filter id="glow" x="-60%" y="-60%" width="220%" height="220%">
        <feGaussianBlur stdDeviation="5" />
      </filter>
    </defs>
    <g transform="translate(300 360) scale(.4847 .3333)">
      <path d={greenland} fill={NONE} />
      <path d={northAmerica} fill={HIGH} />
      <path d={arctic} fill={HIGH} />
      <path d="M868 1160 885 1155 905 1165 932 1183 915 1180 890 1165Z" fill={CRIT} />
      <path d={americaBorders} fill="none" stroke="#fff" vectorEffect="non-scaling-stroke" />
    </g>
    <g transform="translate(1000 400) scale(.5102 .3333)" stroke="none">
      <path d={eurasia} fill={HIGH} />
      <path d={eurasiaIslands} fill={HIGH} />
      <path d={seas} fill="#fff" />
      <path d={unlistedAsia} fill={NONE} />
      <path d={criticalAsia} fill={CRIT} />
      <path d={asiaBorders} fill="none" stroke="#fff" vectorEffect="non-scaling-stroke" />
    </g>
    <g transform="translate(700 760) scale(.3571 .3333)">
      <path d={africaBase} fill={NONE} />
      <path d="M1255 350 1280 345 1305 320 1290 400 1270 445 1250 440Z" fill={NONE} />
      <g stroke="#fff" strokeLinejoin="round">
        {africaHigh.map((d) => (
          <path key={d} d={d} fill={HIGH} vectorEffect="non-scaling-stroke" />
        ))}
        {africaCritical.map((d) => (
          <path key={d} d={d} fill={CRIT} vectorEffect="non-scaling-stroke" />
        ))}
        <path d="M1038 372 1072 368 1112 410 1085 445 1055 450 1035 455 1030 415Z" fill="#f9a75f" vectorEffect="non-scaling-stroke" />
        <path d="M834-180 836-150 770-110 767-92M908-195 918-150 932-120M815 92 822 130M845 82 850 122" fill="none" vectorEffect="non-scaling-stroke" />
      </g>
      <ellipse cx="1108" cy="490" rx="6" ry="8" fill="#fff" />
      <path d={southAmerica} fill={HIGH} />
      <path d="M275 115 300 120 340 140 330 170 285 172 275 150Z" fill={NONE} />
      <path d={southBorders} fill="none" stroke="#fff" vectorEffect="non-scaling-stroke" />
    </g>
    <g transform="translate(1250 760) scale(.3508 .3333)">
      <path d={oceania} fill={HIGH} />
      <path d={papua} fill={NONE} />
    </g>
    <g fill="none" stroke="#1fa073" strokeOpacity="0.5" strokeWidth="1.500" strokeDasharray="6 6">
      {routes.map((d) => (
        <path key={d} d={d} />
      ))}
    </g>
    {markers.map(([x, y]) => (
      <g key={`${x}-${y}`} fill="#ff3d5a">
        <circle cx={x} cy={y} r="19" opacity="0.45" filter="url(#glow)" />
        <circle cx={x} cy={y} r="17" opacity="0.9" />
      </g>
    ))}
    <g fill="#a62840">
      <circle cx="1232" cy="718" r="19" opacity="0.45" filter="url(#glow)" />
      <circle cx="1232" cy="718" r="17" opacity="0.92" />
    </g>
    <circle cx="682" cy="693" r="17" fill="#ff3d5a" stroke="#ffb3be" strokeWidth="2" />
  </svg>
);

/* ---------- Data ---------- */

const filters = ["Country", "Region", "Industry", "Attack Type", "Last Month"];

const stats = [
  { label: "Records Exposed", value: "161.4B", color: "#423e7d", icon: <FileAlert /> },
  { label: "Ransom Demanded", value: "$5.23B", color: "#d0437c", icon: <MdAccountBalanceWallet size={28} /> },
  { label: "Confirmed Victims", value: "6.1K", color: "#fb961e", icon: <MdGppMaybe size={30} /> },
  { label: "Countries Affected", value: "174", color: "#167d86", icon: <MdMap size={30} /> },
  { label: "Data Leaked", value: "3.7K", color: "#cf2727", icon: <LockAlert /> },
  { label: "Ransom Targets", value: "225", color: "#219a50", icon: <TargetPerson /> },
];

const StatIcon = styled.div`
  display: flex;
  align-items: center;
  height: 28px;
`;

const severities = [
  { label: "Critical", count: 12, color: "#a62639" },
  { label: "High", count: 158, color: "#ff3d5a" },
  { label: "Medium", count: 3, color: "#f97316" },
  { label: "Low", count: 0, color: "#1f9d73" },
  { label: "Info", count: 0, color: "#2196a3" },
];

const tipParts = [
  { label: "Critical", count: 225, color: "#a62639", soft: "#c46a78" },
  { label: "High", count: 2947, color: "#ff3d5a", soft: "#ff3d5a", strong: true },
  { label: "Medium", count: 350, color: "#f97316", soft: "#fa9a57" },
  { label: "Low", count: 139, color: "#1f9d73", soft: "#62ba9c" },
];

const countries = [
  { code: "us", name: "United States", count: 3661, color: "#d22929" },
  { code: "fr", name: "France", count: 779, color: "#ff3d5a" },
  { code: "gb", name: "United Kingdom", count: 698, color: "#fb7316" },
  { code: "de", name: "Germany", count: 574, color: "#fb961e" },
  { code: "in", name: "India", count: 530, color: "#f4bd14" },
  { code: "ca", name: "Canada", count: 486, color: "#d0437c" },
  { code: "jp", name: "Japan", count: 428, color: "#14cbe2" },
];

const feeds = ["Live Victim Feed", "Trending Vulnerability News", "Latest DDoS Attacks"];

const lowerNav = [
  { label: "Supply Chain Intelligence", icon: <SupplyChain /> },
  { label: "Incidents", icon: <AlertTriangle /> },
  { label: "Agents", icon: <BotIcon /> },
  { label: "Reports", icon: <ReportIcon /> },
];

/* ---------- App ---------- */

export default function App() {
  return (
    <>
      <GlobalStyle />
      <Shell>
        <Sidebar>
          <Brand>
            <Logo />
          </Brand>
          <Nav aria-label="Main">
            <NavButton>
              <NavSlot><DonutIcon /></NavSlot>
              <span>Dashboards</span>
            </NavButton>
            <NavButton>
              <NavSlot><HalfShield /></NavSlot>
              <span>Attack Surface Management</span>
              <ChevronDown size={16} />
            </NavButton>
            <NavButton>
              <NavSlot><LockShield /></NavSlot>
              <span>Digital Risk Protection</span>
              <ChevronDown size={16} />
            </NavButton>
            <NavGroup>
              <NavButton $compact>
                <NavSlot><ThreatSearch /></NavSlot>
                <span>Cyber Threat Intelligence</span>
                <ChevronUp size={16} />
              </NavButton>
              <SubButton>Threat Hunting</SubButton>
              <SubButton>Vulnerability Intelligence</SubButton>
              <SubButton>Identity &amp; Access Intelligence<ChevronDown size={16} /></SubButton>
              <SubButton>Tactical Intelligence<ChevronDown size={16} /></SubButton>
              <SubButton>Operational Intelligence<ChevronUp size={16} /></SubButton>
              <ActiveLink href="#cyber-trends" aria-current="page">Cyber Trends</ActiveLink>
              <SubButton $deep>Threat Actor Intelligence</SubButton>
              <SubButton $deep>Campaigns</SubButton>
              <SubButton $deep>Threat Reports</SubButton>
            </NavGroup>
            {lowerNav.map((item) => (
              <NavButton key={item.label}>
                <NavSlot>{item.icon}</NavSlot>
                <span>{item.label}</span>
                <ChevronDown size={16} />
              </NavButton>
            ))}
          </Nav>
          <SideScroll />
          <Collapse aria-label="Collapse sidebar">
            <ChevronsLeft size={30} />
          </Collapse>
        </Sidebar>

        <Page>
          <TopBar>
            <h1>Cyber Trends</h1>
            <SearchBox>
              <Search size={17} strokeWidth={2.5} />
              <input type="search" placeholder="I'm looking for..." aria-label="Search" />
              <kbd>
                <Command size={18} />K
              </kbd>
              <SparkButton aria-label="Ask the assistant">
                <Sparkles size={20} />
              </SparkButton>
            </SearchBox>
            <TopActions>
              <IconButton $left={0} $right={23} aria-label="Trial time"><TimerIcon /></IconButton>
              <Divider />
              <Account>
                <Avatar />
                GreenAnimalsBank
                <ChevronDown size={15} />
              </Account>
              <Divider />
              <IconButton $left={20} $right={20} aria-label="Notifications">
                <MdNotifications size={26} />
                <AlertCount>99+</AlertCount>
              </IconButton>
              <Divider />
              <IconButton $left={18} $right={0} aria-label="Profile">
                <MdPerson size={27} />
              </IconButton>
            </TopActions>
          </TopBar>

          <Main>
            <Stack>
              <FilterCard aria-label="Filters">
                {filters.map((name) => (
                  <SelectBox key={name} $dark={name === "Last Month"}>
                    <select aria-label={name} defaultValue={name}>
                      <option>{name}</option>
                    </select>
                    <ChevronDown size={20} strokeWidth={2.5} />
                  </SelectBox>
                ))}
                <SavedButton>
                  <MdOutlineBookmarks size={20} />
                  Saved Filters
                  <ChevronDown size={15} />
                </SavedButton>
              </FilterCard>

              <StatCard aria-label="Key figures">
                {stats.map((s) => (
                  <Stat key={s.label} $color={s.color}>
                    <StatIcon>{s.icon}</StatIcon>
                    <p>{s.label}</p>
                    <strong>{s.value}</strong>
                  </Stat>
                ))}
              </StatCard>

              <Columns>
                <MapCard>
                  <MapHead>
                    <CardTitle>Global Attack Map</CardTitle>
                  </MapHead>
                  <MapArea>
                    <WorldMap />
                    <ZoomControls>
                      <button aria-label="Zoom in">+</button>
                      <button aria-label="Zoom out">−</button>
                    </ZoomControls>
                    <Tooltip role="tooltip">
                      <TipTitle>
                        <Flag code="us" width={26} />
                        United States
                      </TipTitle>
                      <TipRow>
                        Mentions <b>3661</b>
                      </TipRow>
                      <TipRow>
                        Severity
                        <SeverityTag>
                          <Swatch $color="#ff3d5a" $size={12} />
                          High
                        </SeverityTag>
                      </TipRow>
                      <SplitBar>
                        {tipParts.map((p) => (
                          <i key={p.label} style={{ width: `${(p.count / 3661) * 100}%`, background: p.color }} />
                        ))}
                      </SplitBar>
                      <TipLegend>
                        {tipParts.map((p) => (
                          <span key={p.label}>
                            <Swatch $color={p.soft} $size={10} />
                            {p.strong ? <b>{p.label} {p.count}</b> : <>{p.label} {p.count}</>}
                          </span>
                        ))}
                      </TipLegend>
                    </Tooltip>
                  </MapArea>
                  <Legend>
                    {severities.map((s) => (
                      <LegendChip key={s.label}>
                        <Swatch $color={s.color} $size={14} />
                        {s.label}
                        <b>{s.count}</b>
                      </LegendChip>
                    ))}
                  </Legend>
                </MapCard>

                <RankCard>
                  <TabRow role="tablist">
                    <Tab $active role="tab" aria-selected="true">Countries</Tab>
                    <Tab role="tab" aria-selected="false">Threat Actors</Tab>
                    <Tab role="tab" aria-selected="false">Industries</Tab>
                    <Info size={18} />
                  </TabRow>
                  <RankScroll>
                    <RankList>
                      {countries.map((c) => (
                        <RankItem key={c.code}>
                          <RankHead>
                            <Flag code={c.code} />
                            <span>{c.name}</span>
                            <b>{c.count.toLocaleString("en-US")}</b>
                          </RankHead>
                          <Track>
                            <Fill style={{ width: `${(c.count / 3661) * 100}%`, background: c.color }} />
                          </Track>
                        </RankItem>
                      ))}
                    </RankList>
                  </RankScroll>
                </RankCard>
              </Columns>

              <Columns>
                {feeds.map((title, i) => (
                  <FeedCard key={title}>
                    <FeedHead>
                      {i === 0 && <LiveDot />}
                      <CardTitle>{title}</CardTitle>
                      <a href="#all">View All</a>
                    </FeedHead>
                  </FeedCard>
                ))}
              </Columns>
            </Stack>
            <PageScroll />
          </Main>
        </Page>
      </Shell>

      <AssistantButton aria-label="Open assistant">
        <Sparkles size={38} gradient />
      </AssistantButton>
      <HelpButton aria-label="Open help, more than nine messages">
        <svg width="88" height="88" viewBox="0 0 88 88" aria-hidden="true">
          <g fill="none" stroke="#fff" strokeWidth="4.500" strokeLinecap="round">
            <circle cx="44" cy="44" r="12" />
            <path d="M29 29a21 21 0 0 1 30 0M29 59a21 21 0 0 0 30 0" />
          </g>
          <path d="M79 75v8M75 79v4M83 83h-12" stroke="#b9b8d0" strokeWidth="1.500" strokeDasharray="1.500 2.500" />
        </svg>
        <HelpCount>9+</HelpCount>
      </HelpButton>
    </>
  );
}
